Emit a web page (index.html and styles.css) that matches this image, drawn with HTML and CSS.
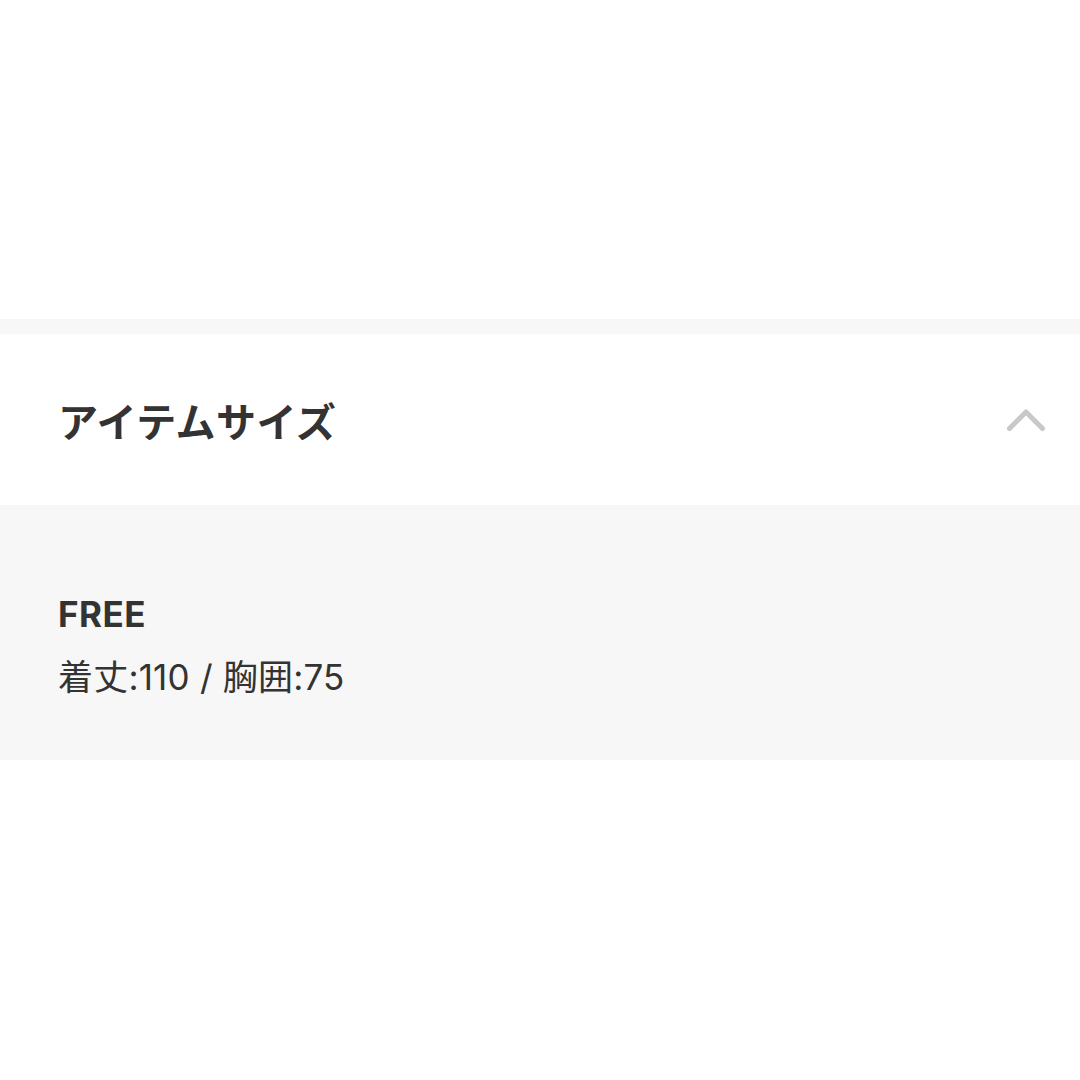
FILE: index.html
```html
<!DOCTYPE html>
<html lang="ja">
<head>
    <meta charset="UTF-8">
    <meta name="viewport" content="width=device-width, initial-scale=1.0">
    <title>アイテムサイズ</title>
    <link rel="stylesheet" href="styles.css">
</head>
<body>
    <div class="top-space"></div>
    <div class="divider"></div>

    <!-- size accordion -->
    <section class="accordion">
        <div class="accordion-head">
            <h2 class="accordion-title">アイテムサイズ</h2>
            <svg class="chevron" width="42" height="26" viewBox="0 0 42 26">
                <polyline points="4.5,21.5 21,5 37.5,21.5" fill="none" stroke="#c8c8c8" stroke-width="5" stroke-linecap="round" stroke-linejoin="round"/>
            </svg>
        </div>
        <div class="accordion-body">
            <p class="size-name">FREE</p>
            <p class="size-detail">着丈:110 / 胸囲:75</p>
        </div>
    </section>
</body>
</html>
```

FILE: styles.css
```css
body {
    margin: 0;
    background-color: #ffffff;
    color: #333333;
    font-family: Inter, "Noto Sans CJK JP", sans-serif;
}
.top-space {
    height: 319px;
}
.divider {
    height: 15px;
    background-color: #f7f7f7;
}
.accordion-head {
    height: 171px;
    display: flex;
    align-items: center;
    justify-content: space-between;
    padding: 0 33px 0 58px;
}
.accordion-title {
    margin: 0;
    font-size: 40px;
    font-weight: 700;
    letter-spacing: 0.5px;
}
.chevron {
    display: block;
}
.accordion-body {
    background-color: #f7f7f7;
    padding: 85px 58px 59px;
}
.size-name {
    margin: 0 0 15px;
    font-size: 35px;
    font-weight: 700;
    line-height: 48px;
    letter-spacing: 0.5px;
}
.size-detail {
    margin: 0;
    font-size: 35px;
    line-height: 48px;
    letter-spacing: 0.2px;
}
```
